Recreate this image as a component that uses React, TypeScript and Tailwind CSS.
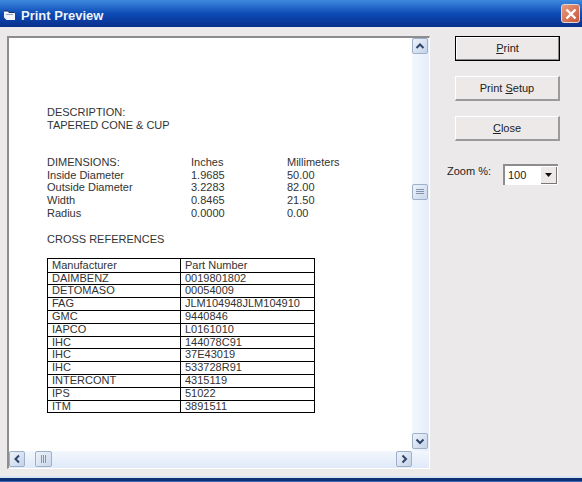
const rows: [string, string][] = [
  ["Manufacturer", "Part Number"],
  ["DAIMBENZ", "0019801802"],
  ["DETOMASO", "00054009"],
  ["FAG", "JLM104948JLM104910"],
  ["GMC", "9440846"],
  ["IAPCO", "L0161010"],
  ["IHC", "144078C91"],
  ["IHC", "37E43019"],
  ["IHC", "533728R91"],
  ["INTERCONT", "4315119"],
  ["IPS", "51022"],
  ["ITM", "3891511"],
];

const dims: [string, string, string][] = [
  ["DIMENSIONS:", "Inches", "Millimeters"],
  ["Inside Diameter", "1.9685", "50.00"],
  ["Outside Diameter", "3.2283", "82.00"],
  ["Width", "0.8465", "21.50"],
  ["Radius", "0.0000", "0.00"],
];

function ScrollBtn({ d }: { d: string }) {
  return (
    <div className="w-[16px] h-[16px] shrink-0 rounded-[2px] border border-[#9db0c8] bg-gradient-to-br from-[#eef3fb] to-[#c4d3e8] flex items-center justify-center">
      <svg width="10" height="10" viewBox="0 0 10 10">
        <path d={d} fill="none" stroke="#2f4468" strokeWidth="2" />
      </svg>
    </div>
  );
}

function Btn({ children, def }: { children: React.ReactNode; def?: boolean }) {
  return (
    <div
      className={
        "w-[105px] h-[25px] flex items-center justify-center text-[11px] text-[#222] bg-[#ece9e8] " +
        (def
          ? "border border-black shadow-[inset_-1px_-1px_0_#8a8a8a,inset_1px_1px_0_#fff]"
          : "border-t border-l border-t-white border-l-white border-r-2 border-b-2 border-r-[#9a9a9a] border-b-[#9a9a9a]")
      }
    >
      {children}
    </div>
  );
}

export default function App() {
  return (
    <div className="w-[582px] h-[482px] overflow-hidden flex flex-col bg-[#ece9ea] font-['Liberation_Sans',Arial,sans-serif]">
      <div className="h-[27px] shrink-0 flex items-center bg-gradient-to-b from-[#3f8ae0] via-[#0d4bb5] to-[#0a2f8c] pt-[4px] pl-[3px] pr-[2px]">
        <svg width="13" height="11" viewBox="0 0 13 11" className="mr-[4px]">
          <path d="M1 1h4l1 1.5h5.5L12 4v6H3.5L1 7.5z" fill="#f2f5fb" />
          <path d="M1 1h4l1 1.5h5.5" fill="none" stroke="#1a2c60" strokeWidth="1" />
          <path d="M3 4.5h7" stroke="#8fa4cc" strokeWidth="1" />
        </svg>
        <span className="text-[13px] font-bold text-[#eef2fa] ml-[1px]">Print Preview</span>
        <div className="ml-auto mt-[-4px] w-[19px] h-[19px] rounded-[3px] border border-[#e8d5cc] bg-gradient-to-br from-[#e89a7c] to-[#c8553a] flex items-center justify-center">
          <svg width="12" height="12" viewBox="0 0 12 12">
            <path d="M1.5 1.5l9 9M10.5 1.5l-9 9" stroke="#fff" strokeWidth="2.4" />
          </svg>
        </div>
      </div>

      <div className="flex-1 flex pt-[9px] pl-[7px] min-h-0">
        <div className="w-[423px] h-[433px] shrink-0 flex flex-col border-t-2 border-l-2 border-t-[#8d8d8d] border-l-[#8d8d8d] border-r border-b border-r-[#fff] border-b-[#fff]">
          <div className="flex flex-1 min-h-0">
            <div className="flex-1 bg-white pl-[38px] pt-[68px] text-[11px] leading-[12.6px] text-[#333]">
              <div>DESCRIPTION:</div>
              <div>TAPERED CONE &amp; CUP</div>
              <div className="mt-[25px] flex flex-col">
                {dims.map((r) => (
                  <div key={r[0]} className="flex">
                    <div className="w-[144px]">{r[0]}</div>
                    <div className="w-[96px]">{r[1]}</div>
                    <div>{r[2]}</div>
                  </div>
                ))}
              </div>
              <div className="mt-[14px]">CROSS REFERENCES</div>
              <div className="mt-[12px] w-[268px] border border-black">
                {rows.map((r, i) => (
                  <div key={i} className={"flex h-[12.8px] " + (i ? "border-t border-black leading-[10px]" : "leading-[12px]")}>
                    <div className="w-[133px] border-r border-black pl-[4px]">{r[0]}</div>
                    <div className="pl-[4px]">{r[1]}</div>
                  </div>
                ))}
              </div>
            </div>
            <div className="w-[17px] shrink-0 flex flex-col pb-[2px] bg-gradient-to-r from-[#f3f7fd] to-[#e6eefa]">
              <ScrollBtn d="M1.5 7L5 3.5 8.5 7" />
              <div className="flex-1 pt-[130px]">
                <div className="w-[16px] h-[16px] rounded-[2px] border border-[#9db0c8] bg-gradient-to-br from-[#eef3fb] to-[#c9d7ea] flex items-center justify-center">
                  <svg width="8" height="8" viewBox="0 0 8 8">
                    <path d="M0 1.5h8M0 3.5h8M0 5.5h8" stroke="#8295ad" />
                  </svg>
                </div>
              </div>
              <ScrollBtn d="M1.5 3.5L5 7 8.5 3.5" />
            </div>
          </div>
          <div className="h-[17px] shrink-0 flex bg-gradient-to-b from-[#f3f7fd] to-[#dfe9f8] pr-[17px]">
            <ScrollBtn d="M7 1.5L3.5 5 7 8.5" />
            <div className="flex-1 pl-[10px]">
              <div className="w-[17px] h-[16px] rounded-[2px] border border-[#9db0c8] bg-gradient-to-br from-[#eef3fb] to-[#c9d7ea] flex items-center justify-center">
                <svg width="8" height="8" viewBox="0 0 8 8">
                  <path d="M1.5 0v8M3.5 0v8M5.5 0v8" stroke="#8295ad" />
                </svg>
              </div>
            </div>
            <ScrollBtn d="M3.5 1.5L7 5 3.5 8.5" />
          </div>
        </div>

        <div className="ml-[25px] flex flex-col gap-[15px] text-[11px] text-[#222]">
          <Btn def><span><u>P</u>rint</span></Btn>
          <Btn><span>Print <u>S</u>etup</span></Btn>
          <Btn><span><u>C</u>lose</span></Btn>
          <div className="flex items-center ml-[-8px] mt-[8px]">
            <span className="w-[56px] mt-[-6px]">Zoom %:</span>
            <div className="w-[55px] h-[21px] border-t-2 border-l-2 border-t-[#8d8d8d] border-l-[#8d8d8d] bg-white flex items-center justify-between pl-[3px] pr-[1px]">
              <span>100</span>
              <div className="w-[16px] h-[17px] bg-[#ece9e8] border-r border-b border-r-[#777] border-b-[#777] flex items-center justify-center">
                <svg width="8" height="4" viewBox="0 0 8 4"><path d="M0 0h7L3.5 4z" fill="#111" /></svg>
              </div>
            </div>
          </div>
        </div>
      </div>

      <div className="h-[6px] shrink-0 flex flex-col">
        <div className="h-[2px] bg-[#d8e4f5]" />
        <div className="h-[3px] bg-[#0e2f72]" />
        <div className="h-[1px] bg-[#3a6ab5]" />
      </div>
    </div>
  );
}
